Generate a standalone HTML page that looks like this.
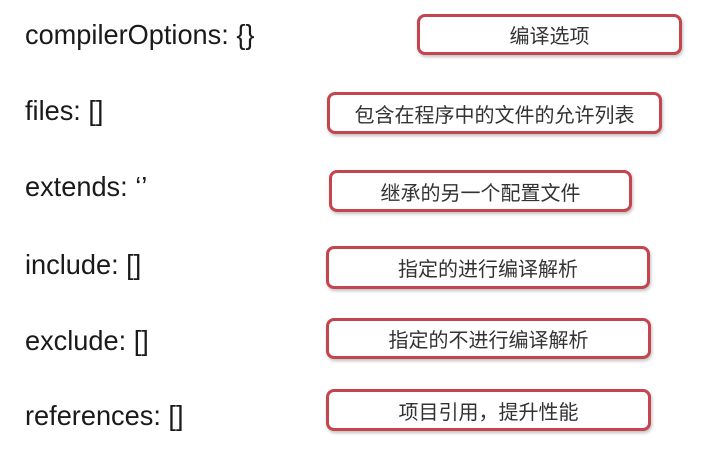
<!DOCTYPE html>
<html><head><meta charset="utf-8"><style>
body{margin:0;width:723px;height:451px;background:#fff;position:relative;overflow:hidden;font-family:"Liberation Sans","Noto Sans CJK SC",sans-serif}
.l{position:absolute;left:25px;font-size:28px;color:#1a1a1a;line-height:30px;white-space:nowrap;transform:scaleX(0.97);transform-origin:left}
.b{position:absolute;box-sizing:border-box;border:3px solid #c4454d;border-radius:8px;background:#fff;box-shadow:1px 2px 3px rgba(0,0,0,.25);display:flex;align-items:center;justify-content:center;font-size:20px;color:#333}
</style></head><body>
<div class="l" style="top:20px">compilerOptions: {}</div>
<div class="l" style="top:96px">files: []</div>
<div class="l" style="top:172px">extends: ‘’</div>
<div class="l" style="top:250px">include: []</div>
<div class="l" style="top:326px">exclude: []</div>
<div class="l" style="top:401px">references: []</div>
<div class="b" style="left:417px;top:14px;width:265px;height:41px">编译选项</div>
<div class="b" style="left:327px;top:92px;width:335px;height:42px">包含在程序中的文件的允许列表</div>
<div class="b" style="left:329px;top:170px;width:303px;height:42px">继承的另一个配置文件</div>
<div class="b" style="left:326px;top:246px;width:324px;height:43px">指定的进行编译解析</div>
<div class="b" style="left:326px;top:318px;width:325px;height:41px">指定的不进行编译解析</div>
<div class="b" style="left:326px;top:389px;width:325px;height:42px">项目引用，提升性能</div>
</body></html>
